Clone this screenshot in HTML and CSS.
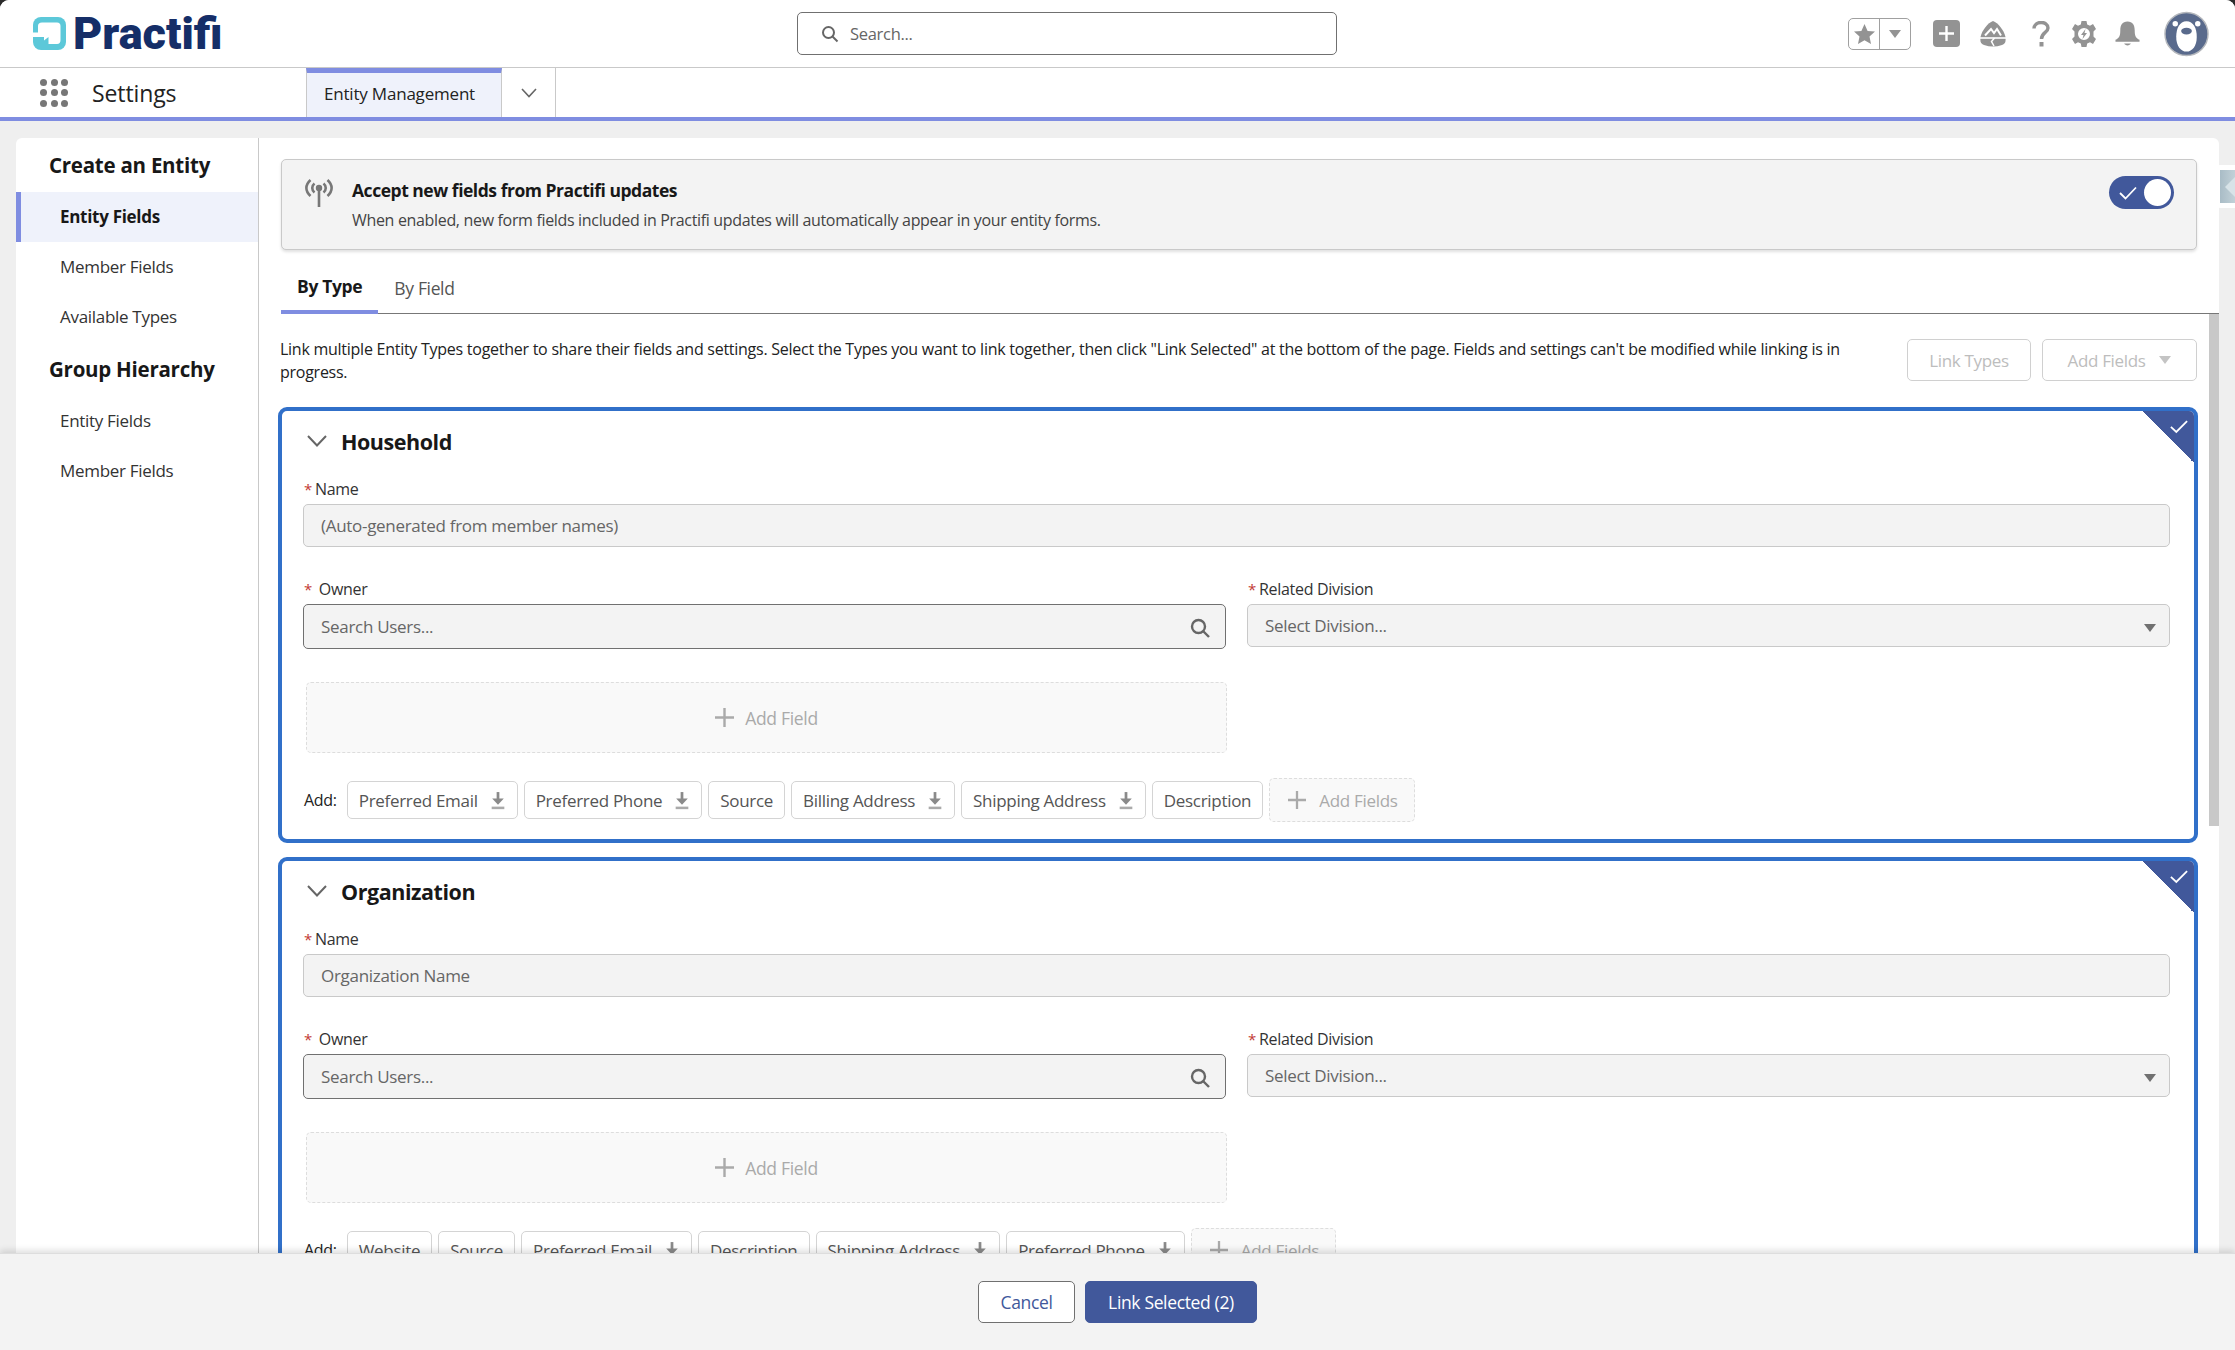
FILE: index.html
```html
<!DOCTYPE html>
<html lang="en">
<head>
  <meta charset="UTF-8" />
  <title>Entity Management | Settings</title>
  <link rel="stylesheet" href="styles.css">
</head>
<body>
  <div class="app">

    <!-- Global Header -->
    <header class="global-header">
      <div class="logo">
        <svg class="logo-mark" width="33" height="33" viewBox="0 0 33 33">
          <rect width="33" height="33" rx="8" fill="#5cc8d9"/>
          <path fill="#fff" d="M5 9Q5 5.500 9 5.500H24Q27.500 5.500 27.500 9V23Q27.500 27 24 27H15.500V20L11 23.500V20H0V15.500H5Z"/>
        </svg>
        <span class="logo-text">Practifi</span>
      </div>
      <div class="global-search">
        <svg width="18" height="18" viewBox="0 0 18 18" fill="none" stroke="#666" stroke-width="2"><circle cx="7.500" cy="7.500" r="5.500"/><path d="M11.500 11.500L16.500 16.500"/></svg>
        <span>Search...</span>
      </div>
      <div class="global-actions">
        <div class="fav-group">
          <span class="fav-star"><svg width="21" height="20" viewBox="0 0 21 20"><path fill="#939393" d="M10.500 0L13.600 6.900 21 7.600 15.500 12.500 17 20 10.500 16.200 4 20 5.500 12.500 0 7.600 7.400 6.900Z"/></svg></span>
          <span class="fav-more"><i class="caret"></i></span>
        </div>
        <svg class="action act-plus" width="27" height="27" viewBox="0 0 27 27"><rect width="27" height="27" rx="4" fill="#939393"/><path d="M13.500 6V21M6 13.500H21" stroke="#fff" stroke-width="2.400"/></svg>
        <svg class="action act-trail" width="26" height="26" viewBox="0 0 26 26">
          <path fill="#939393" d="M13 0C18 2 24 9 25.500 16C26 21 25 23 22 24C16 26 10 26 4 24C1 23 0 21 .5 16C2 9 8 2 13 0Z"/>
          <path fill="none" stroke="#fff" stroke-width="2" d="M5 14.500L11 8 14 12 17 8 21 14.500"/>
          <path stroke="#fff" stroke-width="1.600" d="M0 17H26"/>
          <path fill="none" stroke="#fff" stroke-width="1.500" d="M14.500 17L11.500 20.500 14 25"/>
        </svg>
        <svg class="action act-help" width="18" height="26" viewBox="0 0 18 26" fill="none"><path d="M2 7.500C2 -0.500 16 -0.500 16 7C16 11.500 9.500 11.500 9.500 18" stroke="#939393" stroke-width="3.400"/><rect x="7.500" y="21" width="4" height="4.500" fill="#939393"/></svg>
        <svg class="action act-gear" width="24" height="26" viewBox="0 0 24 26"><path fill="#939393" fill-rule="evenodd" d="M9.500 0H14.500L15.200 3.500 18 4.800 21 3 24 8 21.500 10.500V15.500L24 18 21 23 18 21.200 15.200 22.500 14.500 26H9.500L8.800 22.500 6 21.200 3 23 0 18 2.500 15.500V10.500L0 8 3 3 6 4.800 8.800 3.500ZM12 7A6 6 0 1 0 12 19 6 6 0 0 0 12 7Z"/><path fill="#939393" d="M13.500 8L9 14H11.500L10.500 18 15 12H12.500Z"/></svg>
        <svg class="action act-bell" width="25" height="26" viewBox="0 0 26 26"><path fill="#939393" d="M13 0C18.500 0 20.500 4 20.500 9C20.500 15 21.500 17 25.500 19V21H.5V19C4.500 17 5.500 15 5.500 9C5.500 4 7.500 0 13 0Z"/><path fill="#939393" d="M9.500 23H16.500C15.500 25.500 10.500 25.500 9.500 23Z"/></svg>
        <svg class="avatar" width="45" height="46" viewBox="0 0 46 46">
          <circle cx="23" cy="23" r="22" fill="#596a8c" stroke="#b5b8bd" stroke-width="1.500"/>
          <circle cx="11.500" cy="12.500" r="2.800" fill="#fff"/><circle cx="34.500" cy="12.500" r="2.800" fill="#fff"/>
          <path fill="#fff" d="M23 10C30 10 33.500 17 33.500 26C33.500 35 29 41 23 41C17 41 12.500 35 12.500 26C12.500 17 16 10 23 10Z"/>
          <ellipse cx="23" cy="20" rx="5.500" ry="3.500" fill="#596a8c"/>
        </svg>
      </div>
    </header>

    <!-- App Nav -->
    <nav class="app-nav">
      <div class="app-launcher">
        <div class="waffle"><i></i><i></i><i></i><i></i><i></i><i></i><i></i><i></i><i></i></div>
        <span class="app-name">Settings</span>
      </div>
      <div class="nav-tab">Entity Management</div>
      <div class="nav-more"><svg width="16" height="10" viewBox="0 0 16 10" fill="none" stroke="#666" stroke-width="1.600"><path d="M1 1L8 8.500 15 1"/></svg></div>
    </nav>

    <!-- Main -->
    <main class="main">
      <div class="panel">
        <aside class="side-nav">
          <h2>Create an Entity</h2>
          <a class="active">Entity Fields</a>
          <a>Member Fields</a>
          <a>Available Types</a>
          <h2>Group Hierarchy</h2>
          <a>Entity Fields</a>
          <a>Member Fields</a>
        </aside>

        <section class="content">
          <div class="content-top">
            <div class="banner">
              <svg class="banner-icon" width="30" height="29" viewBox="0 0 30 29" fill="none" stroke="#777" stroke-width="2.600">
                <path d="M6.500 2C1 7 1 13 6.500 18M23.500 2C29 7 29 13 23.500 18M10.500 5.500C7.500 8 7.500 12 10.500 14.500M19.500 5.500C22.500 8 22.500 12 19.500 14.500"/>
                <circle cx="15" cy="10" r="3.200" fill="#777" stroke="none"/><path d="M15 12V29"/>
              </svg>
              <div class="banner-text">
                <div class="banner-title">Accept new fields from Practifi updates</div>
                <div class="banner-sub">When enabled, new form fields included in Practifi updates will automatically appear in your entity forms.</div>
              </div>
              <div class="toggle">
                <svg width="18" height="14" viewBox="0 0 18 14" fill="none" stroke="#fff" stroke-width="1.800"><path d="M1 7L6.500 12.500 17 1.500"/></svg>
                <i></i>
              </div>
            </div>
            <div class="tabs">
              <a class="active">By Type</a>
              <a>By Field</a>
            </div>
          </div>

          <div class="scroller">
            <div class="intro">
              <p>Link multiple Entity Types together to share their fields and settings. Select the Types you want to link together, then click "Link Selected" at the bottom of the page. Fields and settings can't be modified while linking is in<br>progress.</p>
              <div class="intro-actions">
                <button class="btn-off link-types">Link Types</button>
                <button class="btn-off add-fields">Add Fields <i class="caret"></i></button>
              </div>
            </div>

            <!-- Household -->
            <div class="type-card">
              <span class="corner"><svg width="18" height="15" viewBox="0 0 20 15" fill="none" stroke="#fff" stroke-width="2"><path d="M1 8L7 13.500 19 1.500"/></svg></span>
              <div class="card-head">
                <svg width="20" height="12" viewBox="0 0 20 12" fill="none" stroke="#666" stroke-width="2"><path d="M1 1L10 10.500 19 1"/></svg>
                <h3>Household</h3>
              </div>
              <label class="field-label"><b>*</b>Name</label>
              <div class="input off">(Auto-generated from member names)</div>
              <div class="field-row">
                <div>
                  <label class="field-label"><b>*</b>&nbsp;Owner</label>
                  <div class="input lookup">Search Users...
                    <svg width="20" height="20" viewBox="0 0 20 20" fill="none" stroke="#666" stroke-width="2.400"><circle cx="8.500" cy="8.500" r="6.500"/><path d="M13 13L19 19"/></svg>
                  </div>
                </div>
                <div>
                  <label class="field-label"><b>*</b>Related Division</label>
                  <div class="input off select">Select Division...<i class="caret dark"></i></div>
                </div>
              </div>
              <div class="add-slot"><svg class="plus" width="19" height="19" viewBox="0 0 19 19"><path d="M9.500 0V19M0 9.500H19" stroke="#aaa" stroke-width="2.400"/></svg> Add Field</div>
              <div class="chip-row">
                <span class="chip-label">Add:</span>
                <span class="chip">Preferred Email <svg class="dl" width="16" height="19" viewBox="0 0 14 18"><path d="M7 1V8" stroke="#8a8a8a" stroke-width="2.600"/><path d="M1.500 7H12.500L7 13Z" fill="#8a8a8a"/><path d="M1 16H13" stroke="#aaa" stroke-width="2.400"/></svg></span>
                <span class="chip">Preferred Phone <svg class="dl" width="16" height="19" viewBox="0 0 14 18"><path d="M7 1V8" stroke="#8a8a8a" stroke-width="2.600"/><path d="M1.500 7H12.500L7 13Z" fill="#8a8a8a"/><path d="M1 16H13" stroke="#aaa" stroke-width="2.400"/></svg></span>
                <span class="chip">Source</span>
                <span class="chip">Billing Address <svg class="dl" width="16" height="19" viewBox="0 0 14 18"><path d="M7 1V8" stroke="#8a8a8a" stroke-width="2.600"/><path d="M1.500 7H12.500L7 13Z" fill="#8a8a8a"/><path d="M1 16H13" stroke="#aaa" stroke-width="2.400"/></svg></span>
                <span class="chip">Shipping Address <svg class="dl" width="16" height="19" viewBox="0 0 14 18"><path d="M7 1V8" stroke="#8a8a8a" stroke-width="2.600"/><path d="M1.500 7H12.500L7 13Z" fill="#8a8a8a"/><path d="M1 16H13" stroke="#aaa" stroke-width="2.400"/></svg></span>
                <span class="chip">Description</span>
                <span class="chip chip-add"><svg class="plus" width="18" height="18" viewBox="0 0 19 19"><path d="M9.500 0V19M0 9.500H19" stroke="#aaa" stroke-width="2.400"/></svg> Add Fields</span>
              </div>
            </div>

            <!-- Organization -->
            <div class="type-card">
              <span class="corner"><svg width="18" height="15" viewBox="0 0 20 15" fill="none" stroke="#fff" stroke-width="2"><path d="M1 8L7 13.500 19 1.500"/></svg></span>
              <div class="card-head">
                <svg width="20" height="12" viewBox="0 0 20 12" fill="none" stroke="#666" stroke-width="2"><path d="M1 1L10 10.500 19 1"/></svg>
                <h3>Organization</h3>
              </div>
              <label class="field-label"><b>*</b>Name</label>
              <div class="input off">Organization Name</div>
              <div class="field-row">
                <div>
                  <label class="field-label"><b>*</b>&nbsp;Owner</label>
                  <div class="input lookup">Search Users...
                    <svg width="20" height="20" viewBox="0 0 20 20" fill="none" stroke="#666" stroke-width="2.400"><circle cx="8.500" cy="8.500" r="6.500"/><path d="M13 13L19 19"/></svg>
                  </div>
                </div>
                <div>
                  <label class="field-label"><b>*</b>Related Division</label>
                  <div class="input off select">Select Division...<i class="caret dark"></i></div>
                </div>
              </div>
              <div class="add-slot"><svg class="plus" width="19" height="19" viewBox="0 0 19 19"><path d="M9.500 0V19M0 9.500H19" stroke="#aaa" stroke-width="2.400"/></svg> Add Field</div>
              <div class="chip-row">
                <span class="chip-label">Add:</span>
                <span class="chip">Website</span>
                <span class="chip">Source</span>
                <span class="chip">Preferred Email <svg class="dl" width="16" height="19" viewBox="0 0 14 18"><path d="M7 1V8" stroke="#8a8a8a" stroke-width="2.600"/><path d="M1.500 7H12.500L7 13Z" fill="#8a8a8a"/><path d="M1 16H13" stroke="#aaa" stroke-width="2.400"/></svg></span>
                <span class="chip">Description</span>
                <span class="chip">Shipping Address <svg class="dl" width="16" height="19" viewBox="0 0 14 18"><path d="M7 1V8" stroke="#8a8a8a" stroke-width="2.600"/><path d="M1.500 7H12.500L7 13Z" fill="#8a8a8a"/><path d="M1 16H13" stroke="#aaa" stroke-width="2.400"/></svg></span>
                <span class="chip">Preferred Phone <svg class="dl" width="16" height="19" viewBox="0 0 14 18"><path d="M7 1V8" stroke="#8a8a8a" stroke-width="2.600"/><path d="M1.500 7H12.500L7 13Z" fill="#8a8a8a"/><path d="M1 16H13" stroke="#aaa" stroke-width="2.400"/></svg></span>
                <span class="chip chip-add"><svg class="plus" width="18" height="18" viewBox="0 0 19 19"><path d="M9.500 0V19M0 9.500H19" stroke="#aaa" stroke-width="2.400"/></svg> Add Fields</span>
              </div>
            </div>
          </div>

          <div class="scroll-thumb"></div>
        </section>

        <div class="side-tab"><span></span></div>
      </div>
    </main>

    <!-- Footer -->
    <footer class="footer">
      <button class="btn-cancel">Cancel</button>
      <button class="btn-primary">Link Selected (2)</button>
    </footer>
  </div>
</body>
</html>
```

FILE: styles.css
```css
:root {
  --brand: #41589b;
  --accent: #7f8de1;
  --card-blue: #3170c9;
  --tab-bg: #eff2fb;
  --line: #c9c9c9;
  --text: #181818;
  --muted: #444;
  --off-bg: #f3f3f3;
}

* {
  box-sizing: border-box;
  margin: 0;
  padding: 0;
}

html, body {
  height: 100%;
  background-color: #2b2b2b;
  font-family: "Open Sans", "Noto Sans", sans-serif;
  font-size: 16px;
  letter-spacing: -0.3px;
  color: var(--text);
  overflow: hidden;
}

.app {
  display: flex;
  flex-direction: column;
  height: 100vh;
  background-color: #efefef;
  border-radius: 9px 9px 0 0;
  overflow: hidden;
}

/* Global header */
.global-header {
  display: flex;
  align-items: center;
  flex: none;
  height: 68px;
  position: relative;
  padding: 1px 26px 1px 33px;
  background-color: #fff;
  border-bottom: 1px solid var(--line);
}

.logo {
  display: flex;
  align-items: center;
  gap: 7px;
}

.logo-text {
  font-family: "Roboto", "Liberation Sans", sans-serif;
  font-size: 45px;
  font-weight: 900;
  letter-spacing: 0;
  line-height: 40px;
  color: #152e68;
}

.global-search {
  display: flex;
  align-items: center;
  gap: 11px;
  position: absolute;
  left: 797px;
  top: 12px;
  width: 540px;
  height: 43px;
  padding-left: 23px;
  border: 1px solid #707070;
  border-radius: 5px;
  font-size: 16.500px;
  color: #666;
}

.global-actions {
  display: flex;
  align-items: center;
  margin-left: auto;
}

.fav-group {
  display: flex;
  width: 63px;
  height: 32px;
  margin-right: 22px;
  border: 1px solid #a0a0a0;
  border-radius: 5px;
}

.fav-star {
  display: flex;
  align-items: center;
  justify-content: center;
  width: 31px;
  border-right: 1px solid #a0a0a0;
}

.fav-more {
  display: flex;
  align-items: center;
  justify-content: center;
  flex: 1;
}

.caret {
  display: inline-block;
  width: 0;
  height: 0;
  border-left: 6.500px solid transparent;
  border-right: 6.500px solid transparent;
  border-top: 8px solid #939393;
}

.caret.dark {
  border-top-color: #707070;
}

.act-plus {
  margin-right: 20px;
}

.act-trail {
  margin-right: 26px;
}

.act-help {
  margin-right: 22px;
}

.act-gear {
  margin-right: 19px;
}

.act-bell {
  margin-right: 24px;
}

/* App nav */
.app-nav {
  display: flex;
  flex: none;
  height: 53px;
  background-color: #fff;
  border-bottom: 4px solid var(--accent);
}

.app-launcher {
  display: flex;
  align-items: center;
  width: 306px;
  padding-left: 40px;
}

.waffle {
  display: grid;
  grid-template-columns: repeat(3, 7px);
  gap: 3.500px;
  margin-right: 24px;
}

.waffle i {
  width: 7px;
  height: 7px;
  border-radius: 50%;
  background-color: #777;
}

.app-name {
  font-size: 23px;
  letter-spacing: -0.1px;
  color: #222;
}

.nav-tab {
  display: flex;
  align-items: center;
  width: 196px;
  padding: 0 0 3px 17px;
  background-color: var(--tab-bg);
  border: 1px solid var(--line);
  border-top: 5px solid var(--accent);
  border-bottom: none;
  font-size: 17px;
  letter-spacing: -0.2px;
  color: #222;
}

.nav-more {
  display: flex;
  align-items: center;
  justify-content: center;
  width: 54px;
  border-right: 1px solid var(--line);
}

/* Main panel */
.main {
  flex: 1;
  min-height: 0;
  padding: 17px 16px 0;
}

.panel {
  display: flex;
  height: 100%;
  position: relative;
  background-color: #fff;
  border-radius: 6px 6px 0 0;
}

.side-nav {
  flex: none;
  width: 243px;
  padding-top: 8px;
  border-right: 1px solid var(--line);
}

.side-nav h2 {
  height: 46px;
  padding-left: 33px;
  font-size: 20.500px;
  line-height: 38px;
  font-weight: 700;
  letter-spacing: -0.25px;
}

.side-nav h2:not(:first-child) {
  height: 54px;
  line-height: 54px;
}

.side-nav a {
  display: block;
  height: 50px;
  padding-left: 44px;
  font-size: 17px;
  line-height: 50px;
  color: #333;
}

.side-nav a.active {
  padding-left: 39px;
  background-color: var(--tab-bg);
  border-left: 5px solid var(--accent);
  font-weight: 700;
  color: var(--text);
}

.content {
  display: flex;
  flex-direction: column;
  flex: 1;
  min-width: 0;
  position: relative;
  overflow: hidden;
}

.content-top {
  flex: none;
  padding: 21px 0 0 22px;
}

.banner {
  display: flex;
  align-items: center;
  width: 1916px;
  height: 91px;
  padding: 0 22px 0 22px;
  background-color: var(--off-bg);
  border: 1px solid var(--line);
  border-radius: 5px;
  box-shadow: 0 2px 3px rgba(0, 0, 0, 0.12);
}

.banner-icon {
  align-self: flex-start;
  margin-top: 18px;
}

.banner-text {
  flex: 1;
  padding-left: 18px;
}

.banner-title {
  font-size: 17.500px;
  font-weight: 700;
  letter-spacing: -0.47px;
  line-height: 28px;
}

.banner-sub {
  margin-top: 3px;
  font-size: 16px;
  letter-spacing: -0.33px;
  line-height: 26px;
  color: var(--muted);
}

.toggle {
  display: flex;
  align-items: center;
  justify-content: space-between;
  align-self: flex-start;
  width: 65px;
  height: 33px;
  margin-top: 16px;
  padding: 0 3px 0 10px;
  background-color: var(--brand);
  border-radius: 17px;
}

.toggle i {
  width: 27px;
  height: 27px;
  border-radius: 50%;
  background-color: #fff;
}

.tabs {
  display: flex;
  height: 64px;
  border-bottom: 1px solid #777;
}

.tabs a {
  display: flex;
  align-items: center;
  height: 64px;
  padding: 11px 16px 0;
  font-size: 17.500px;
  letter-spacing: -0.35px;
  color: #555;
}

.tabs a.active {
  border-bottom: 4px solid var(--accent);
  font-weight: 700;
  color: var(--text);
}

.scroller {
  flex: 1;
  min-height: 0;
  padding: 0 22px 0 19px;
  overflow: hidden;
}

/* scrollbars are not painted in the capture, so the thumb is drawn */
.scroll-thumb {
  position: absolute;
  top: 176px;
  right: 0;
  width: 10px;
  height: 512px;
  background-color: #c8c8c8;
}

.intro {
  display: flex;
  justify-content: space-between;
  align-items: flex-start;
  height: 93px;
  padding: 24px 0 0 2px;
}

.intro p {
  font-size: 16px;
  letter-spacing: -0.26px;
  line-height: 23px;
  color: #222;
}

.intro-actions {
  display: flex;
  flex: none;
  gap: 11px;
  margin-top: 1px;
}

.btn-off {
  display: flex;
  align-items: center;
  justify-content: center;
  height: 42px;
  background-color: #fff;
  border: 1px solid #d0d0d0;
  border-radius: 5px;
  font: inherit;
  font-size: 17px;
  letter-spacing: -0.35px;
  color: #bdbdbd;
}

.link-types {
  width: 124px;
}

.add-fields {
  gap: 14px;
  width: 155px;
}

.add-fields .caret {
  border-top-color: #c4c4c4;
}

/* Type cards */
.type-card {
  position: relative;
  width: 1920px;
  height: 436px;
  margin-bottom: 14px;
  padding: 0 24px 0 21px;
  background-color: #fff;
  border: 4px solid var(--card-blue);
  border-radius: 9px;
}

.corner {
  position: absolute;
  top: 0;
  right: 0;
  width: 52px;
  height: 52px;
  background: linear-gradient(to top right, transparent 50%, var(--brand) 50%);
  border-top-right-radius: 5px;
}

.corner svg {
  position: absolute;
  top: 8px;
  right: 6px;
}

.card-head {
  display: flex;
  align-items: center;
  gap: 14px;
  height: 62px;
  padding: 0 0 2px 4px;
}

.card-head h3 {
  font-size: 21.500px;
  font-weight: 700;
  letter-spacing: -0.45px;
}

.field-label {
  display: block;
  height: 31px;
  padding-top: 6px;
  font-size: 16px;
  letter-spacing: -0.3px;
  line-height: 20px;
  color: #333;
}

.field-label b {
  margin: 0 3px 0 1px;
  font-size: 15px;
  font-weight: 400;
  color: #c23934;
}

.input {
  display: flex;
  align-items: center;
  position: relative;
  height: 43px;
  padding-left: 17px;
  border: 1px solid var(--line);
  border-radius: 5px;
  font-size: 17px;
  letter-spacing: -0.3px;
  color: #666;
}

.input.off {
  background-color: var(--off-bg);
}

.lookup {
  height: 45px;
  background-color: var(--off-bg);
  border-color: #707070;
}

.lookup svg {
  position: absolute;
  right: 15px;
  top: 13px;
}

.select .caret {
  position: absolute;
  right: 13px;
  top: 19px;
}

.field-row {
  display: grid;
  grid-template-columns: 923px 923px;
  gap: 21px;
  margin-top: 26px;
}

.add-slot {
  display: flex;
  align-items: center;
  justify-content: center;
  gap: 11px;
  width: 921px;
  height: 71px;
  margin: 33px 0 0 3px;
  background-color: #f9f9f9;
  border: 1px dashed #ddd;
  border-radius: 5px;
  font-size: 17.500px;
  color: #aaa;
}

.chip-row {
  display: flex;
  align-items: center;
  gap: 6px;
  margin-top: 25px;
}

.chip-label {
  margin: 0 4px 0 1px;
  font-size: 16px;
  color: #222;
}

.chip {
  display: flex;
  align-items: center;
  gap: 12px;
  height: 38px;
  padding: 0 11px;
  border: 1px solid #d4d4d4;
  border-radius: 5px;
  font-size: 17px;
  color: #555;
  white-space: nowrap;
}

.chip-add {
  gap: 13px;
  height: 44px;
  padding: 0 16px 0 18px;
  background-color: #f9f9f9;
  border: 1px dashed #ddd;
  color: #aaa;
}

/* Collapsed side tab */
.side-tab {
  position: absolute;
  top: 27px;
  left: 2199px;
  width: 20px;
  height: 43px;
  padding: 5px 0 5px 5px;
  background-color: #fff;
  border-radius: 5px 0 0 5px;
}

.side-tab span {
  display: block;
  position: relative;
  height: 100%;
  background: linear-gradient(to right, #a9bcc6, #c2d1d8);
}

.side-tab span::after {
  content: "";
  position: absolute;
  top: 7px;
  left: 5px;
  border-top: 10px solid transparent;
  border-bottom: 10px solid transparent;
  border-right: 10px solid #d8e3e8;
}

/* Footer */
.footer {
  display: flex;
  justify-content: center;
  gap: 10px;
  flex: none;
  position: relative;
  height: 97px;
  padding-top: 27px;
  background-color: #f3f3f3;
  border-top: 1px solid #ddd;
  box-shadow: 0 -3px 6px rgba(0, 0, 0, 0.12);
}

.footer button {
  height: 42px;
  border-radius: 5px;
  font: inherit;
  font-size: 17.500px;
  letter-spacing: -0.35px;
}

.btn-cancel {
  width: 97px;
  background-color: #fff;
  border: 1px solid #707070;
  color: var(--brand);
}

.btn-primary {
  width: 172px;
  background-color: var(--brand);
  border: 1px solid var(--brand);
  color: #fff;
}
```
